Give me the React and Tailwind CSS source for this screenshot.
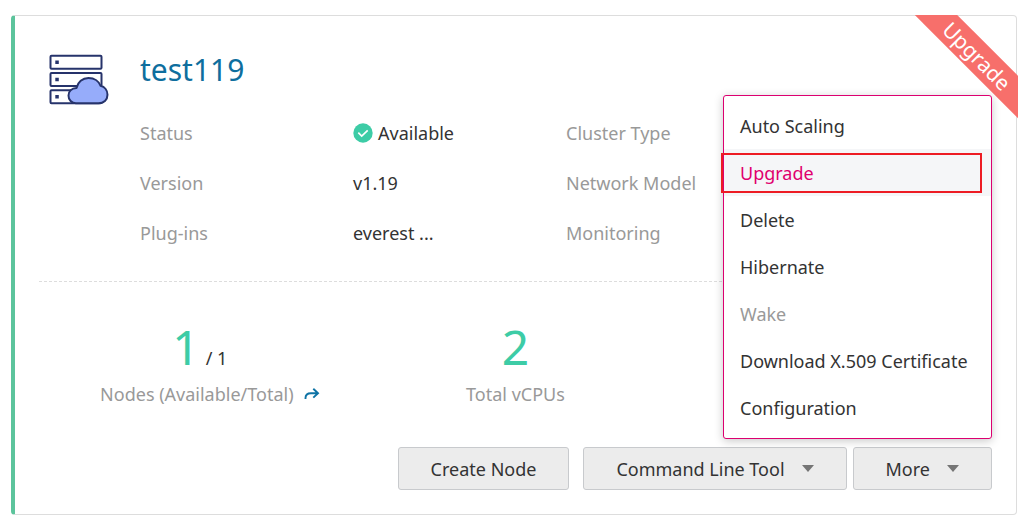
import React from "react";

const details = [
  ["Status", "Available", "Cluster Type"],
  ["Version", "v1.19", "Network Model"],
  ["Plug-ins", "everest ...", "Monitoring"],
];

const menuItems = [
  { label: "Auto Scaling" },
  { label: "Upgrade", active: true },
  { label: "Delete" },
  { label: "Hibernate" },
  { label: "Wake", disabled: true },
  { label: "Download X.509 Certificate" },
  { label: "Configuration" },
];

function ClusterIcon() {
  return (
    <svg width="60" height="52" viewBox="0 0 60 52" fill="none" stroke="#26336b" strokeWidth="2" strokeLinejoin="round" aria-hidden="true">
      <rect x="1.500" y="1.800" width="51" height="13" rx="1" />
      <rect x="1.500" y="19" width="51" height="13" rx="1" />
      <rect x="1.500" y="36.300" width="51" height="13" rx="1" />
      <path d="M6.300 6.500h3.500v3.500H6.300zM6.300 23.800h3.500v3.500H6.300zM6.300 41.100h3.500v3.500H6.300z" fill="#26336b" stroke="none" />
      <path d="M27 49.300a7.500 7.500 0 0 1-7.500-7.700c0-4.300 3.300-7.300 8-7.600C28.700 28 33.500 24 39.500 24c6 0 10.500 3.300 12 7.800 4.300 1 7 4.700 7 9 0 5-3.800 8.500-9 8.500z" fill="#96acfa" />
    </svg>
  );
}

function CheckIcon() {
  return (
    <svg className="shrink-0" width="20" height="20" viewBox="0 0 20 20" aria-hidden="true">
      <circle cx="10" cy="10" r="9.700" fill="#3dcca6" />
      <path d="M5.300 9.700l3.400 3.300 6-5.600" fill="none" stroke="#fff" strokeWidth="1.700" />
    </svg>
  );
}

function JumpIcon() {
  return (
    <svg width="16" height="12" viewBox="0 0 16 12" fill="none" stroke="#0e73a5" strokeWidth="1.900" aria-hidden="true">
      <path d="M1.500 11V10C1.500 6.700 4 5.200 7 5.200h6.500M9.300 .8l4.700 4.400-4.700 4.400" />
    </svg>
  );
}

function Caret() {
  return (
    <svg width="12" height="7" viewBox="0 0 12 7" aria-hidden="true">
      <path d="M0 0h12L6 7z" fill="#757575" />
    </svg>
  );
}

function Button({ children, caret, ...props }) {
  return (
    <button
      type="button"
      className="flex h-[43px] items-center justify-center gap-[17px] rounded-[3px] border border-[#c8cacd] bg-[#ececec] px-8"
      {...props}
    >
      {children}
      {caret && <Caret />}
    </button>
  );
}

function MoreMenu() {
  return (
    <div className="relative">
      <Button caret aria-haspopup="menu" aria-expanded="true">More</Button>
      <div
        role="menu"
        className="absolute right-0 bottom-full mb-2 w-[269px] rounded-[3px] border border-[#dc0070] bg-white pt-[6px] pb-[7px] shadow-[0_2px_10px_rgba(0,0,0,0.22)]"
      >
        {menuItems.map(({ label, active, disabled }) => (
          <button
            key={label}
            type="button"
            role="menuitem"
            disabled={disabled}
            className={`relative block h-[47px] w-full px-4 text-left whitespace-nowrap ${
              active ? "bg-[#f5f6f8] text-[#e0006e]" : disabled ? "text-[#999999]" : "text-[#333333]"
            }`}
          >
            {label}
            {active && <span className="absolute top-1 right-[9px] bottom-[3px] -left-[3px] border-2 border-[#ed1c24]" />}
          </button>
        ))}
      </div>
    </div>
  );
}

function Ribbon() {
  return (
    <div className="pointer-events-none absolute -top-px -right-[2px] size-[104px] overflow-hidden">
      <div className="absolute top-[26px] -right-[39px] h-[30px] w-40 rotate-45 bg-[#f76f6b] text-center text-[21px] leading-[30px] text-white">
        Upgrade
      </div>
    </div>
  );
}

export default function App() {
  return (
    <main className="min-h-screen bg-white pt-[15px] pr-3 pb-[7px] pl-[11px] font-['Noto_Sans',sans-serif] text-lg leading-6 text-[#333333]">
      <section className="relative rounded-[4px] border border-l-4 border-[#dddddd] border-l-[#5cc49c] px-6 pb-6">
        <Ribbon />
        <div className="flex gap-8 pt-[34px]">
          <div className="w-[69px] shrink-0 pt-1 pl-[10px]">
            <ClusterIcon />
          </div>
          <div className="min-w-0 flex-1">
            <h1 className="text-3xl leading-10">
              <a href="#cluster" className="text-[#0e6e9e]">test119</a>
            </h1>
            <dl className="mt-[31px] grid gap-y-[26px]">
              {details.map(([name, value, second]) => (
                <div key={name} className="grid grid-cols-4">
                  <dt className="text-[#999999]">{name}</dt>
                  <dd className="flex items-center gap-[5px]">
                    {name === "Status" && <CheckIcon />}
                    {value}
                  </dd>
                  <dt className="whitespace-nowrap text-[#999999]">{second}</dt>
                  <dd />
                </div>
              ))}
            </dl>
          </div>
        </div>
        <div className="mt-9 border-t border-dashed border-[#dddddd]" />
        <div className="grid grid-cols-3 pt-9 text-center">
          <div>
            <p className="flex h-[58px] items-baseline justify-center gap-[6px] pl-1">
              <span className="text-5xl leading-[58px] text-[#3dcca6]">1</span>
              <span>/ 1</span>
            </p>
            <p className="mt-[6px] flex items-center justify-center gap-[10px] text-[#999999]">
              Nodes (Available/Total)
              <a href="#nodes" aria-label="View nodes" className="-mr-6"><JumpIcon /></a>
            </p>
          </div>
          <div>
            <p className="text-5xl leading-[58px] text-[#3dcca6]">2</p>
            <p className="mt-[6px] text-[#999999]">Total vCPUs</p>
          </div>
        </div>
        <div className="mt-[41px] flex justify-end gap-[6px]">
          <div className="mr-2"><Button>Create Node</Button></div>
          <Button caret>Command Line Tool</Button>
          <MoreMenu />
        </div>
      </section>
    </main>
  );
}
